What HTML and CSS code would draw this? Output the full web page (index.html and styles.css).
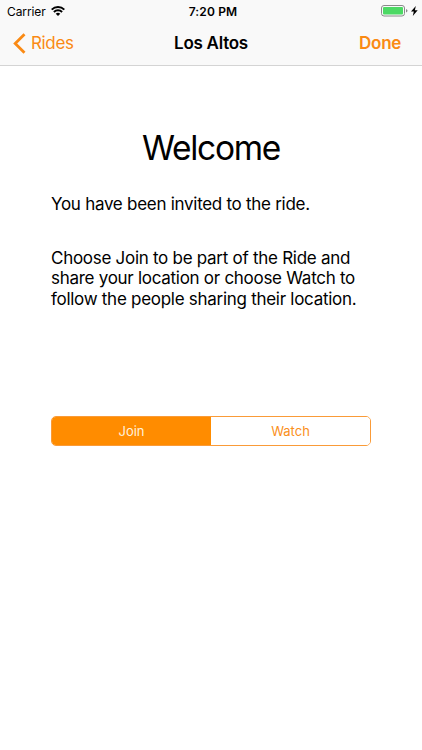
FILE: index.html
```html
<!DOCTYPE html>
<html lang="en">

<head>
    <meta charset="UTF-8">
    <meta name="viewport" content="width=device-width, initial-scale=1.0">
    <title>Los Altos</title>
    <link rel="stylesheet" href="styles.css">
</head>

<body>
    <header class="header">
        <div class="status-bar">
            <div class="status-left">
                <span class="carrier">Carrier</span>
                <svg class="wifi" viewBox="0 0 14 10">
                    <path d="M.7 3.6a9 9 0 0 1 12.6 0M2.9 6a5.9 5.9 0 0 1 8.2 0" fill="none" stroke="#000" stroke-width="2" />
                    <path d="M7 10L4.7 7.8a3.3 3.3 0 0 1 4.6 0z" />
                </svg>
            </div>
            <span class="time">7:20 PM</span>
            <div class="status-right">
                <svg class="battery" viewBox="0 0 27 12">
                    <rect x=".5" y=".5" width="23" height="10.5" rx="2.5" fill="none" stroke="#8a8a8a" />
                    <rect x="2" y="2" width="20" height="7.5" rx="1" fill="#4cd964" />
                    <path d="M25 4q1.5.5 1.5 1.8T25 7.6z" fill="#8a8a8a" />
                </svg>
                <svg class="bolt" viewBox="0 0 7 10">
                    <path d="M4.8 0L0 5.6h2.8L1.8 10 6.7 4.2H3.9z" />
                </svg>
            </div>
        </div>
        <nav class="nav-bar">
            <a class="back">
                <svg class="chevron" viewBox="0 0 13 21">
                    <path d="M11.5 1.3L2.2 10.5l9.3 9.2" fill="none" stroke="#fa8a14" stroke-width="2.8" />
                </svg>
                <span class="back-label">Rides</span>
            </a>
            <h1 class="title">Los Altos</h1>
            <a class="done"><span class="done-label">Done</span></a>
        </nav>
    </header>

    <main class="content">
        <h2 class="welcome">Welcome</h2>
        <p class="invited">You have been invited to the ride.</p>
        <p class="choose">Choose Join to be part of the Ride and<br>share your location or choose Watch to<br>follow the people sharing their location.</p>
        <div class="segments">
            <button class="segment selected">Join</button>
            <button class="segment">Watch</button>
        </div>
    </main>
</body>

</html>
```

FILE: styles.css
```css
* {
    box-sizing: border-box;
}

body {
    margin: 0;
    background: #fff;
    color: #000;
    font-family: Inter, "Liberation Sans", sans-serif;
}

.header {
    height: 66px;
    background: #f9f9f9;
    border-bottom: 1px solid #d4d4d4;
}

.status-bar {
    display: grid;
    grid-template-columns: 1fr auto 1fr;
    align-items: center;
    height: 22px;
    padding: 0 4px 0 7px;
    font-size: 12px;
}

.status-left,
.status-right {
    display: flex;
    align-items: center;
}

.status-left {
    gap: 5px;
}

.carrier {
    letter-spacing: -0.1px;
}

.status-right {
    justify-content: flex-end;
    gap: 3px;
    padding-bottom: 1px;
}

.time {
    padding-left: 1px;
    font-weight: 600;
    letter-spacing: 0.15px;
}

.wifi {
    width: 14px;
    height: 10px;
}

.battery {
    width: 27px;
    height: 12px;
}

.bolt {
    width: 7px;
    height: 10px;
}

.nav-bar {
    display: grid;
    grid-template-columns: 1fr auto 1fr;
    align-items: center;
    height: 42px;
    padding: 0 13px;
    font-size: 17px;
}

.back,
.done {
    color: #fa8a14;
}

.back {
    display: flex;
    align-items: center;
    gap: 5px;
    letter-spacing: -0.35px;
}

.chevron {
    width: 13px;
    height: 21px;
}

.title {
    margin: 0;
    font-size: 17px;
    font-weight: 600;
    letter-spacing: -0.25px;
}

.done {
    padding-right: 8px;
    font-weight: 600;
    letter-spacing: -0.3px;
    text-align: right;
}

.content {
    padding: 61px 51px 0;
}

.welcome {
    margin: 0;
    font-size: 33.5px;
    font-weight: 400;
    letter-spacing: -1.3px;
    line-height: 42px;
    text-align: center;
}

.invited,
.choose {
    margin: 0;
    font-size: 17px;
    letter-spacing: -0.28px;
    line-height: 20.5px;
    white-space: nowrap;
}

.invited {
    margin-top: 25px;
}

.choose {
    margin-top: 33px;
}

.segments {
    display: flex;
    height: 30px;
    margin-top: 107px;
    border: 1px solid #fa9b38;
    border-radius: 5px;
    overflow: hidden;
}

.segment {
    flex: 1;
    padding: 0;
    border: 0;
    background: #fff;
    color: #fa8f20;
    font: 13px Inter, "Liberation Sans", sans-serif;
}

.selected {
    background: #ff8c00;
    color: #fff0dc;
}
```
